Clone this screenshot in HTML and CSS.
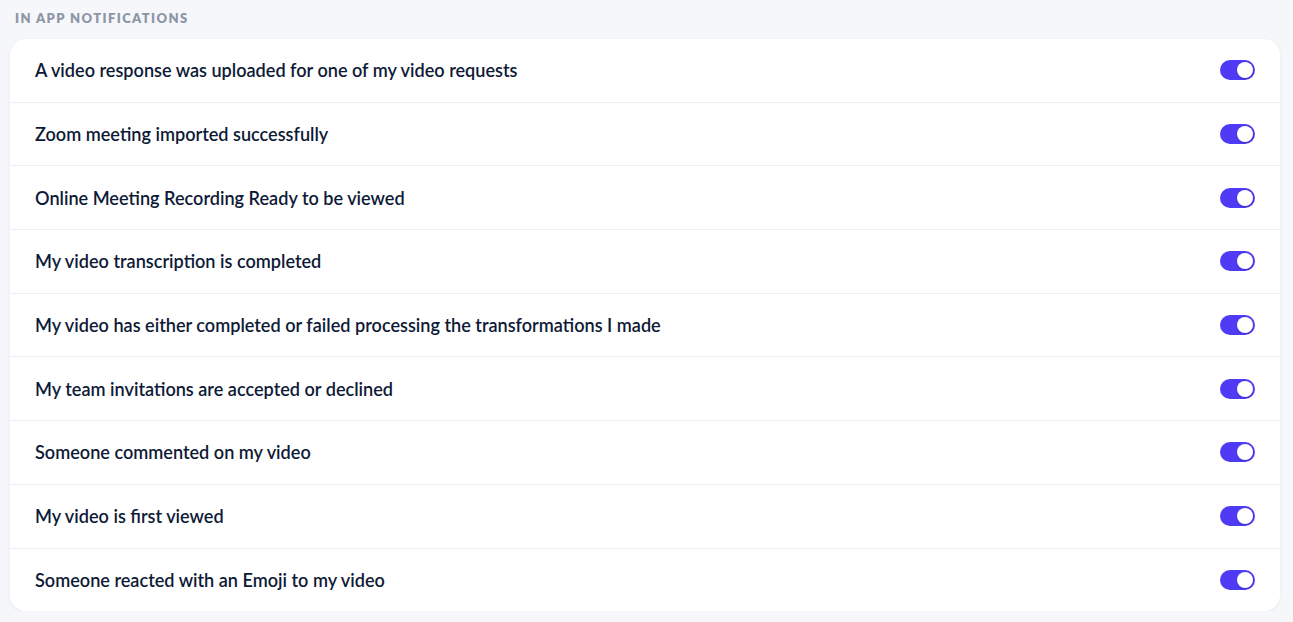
FILE: index.html
```html
<!DOCTYPE html>
<html lang="en">
<head>
    <meta charset="UTF-8">
    <title>Notification settings</title>
    <link rel="stylesheet" href="styles.css">
</head>
<body>
    <div class="section">
        <h3 class="section-title">In app notifications</h3>
        <div class="card">
            <div class="row"><span>A video response was uploaded for one of my video requests</span><span class="toggle on"></span></div>
            <div class="row"><span>Zoom meeting imported successfully</span><span class="toggle on"></span></div>
            <div class="row"><span>Online Meeting Recording Ready to be viewed</span><span class="toggle on"></span></div>
            <div class="row"><span>My video transcription is completed</span><span class="toggle on"></span></div>
            <div class="row"><span>My video has either completed or failed processing the transformations I made</span><span class="toggle on"></span></div>
            <div class="row"><span>My team invitations are accepted or declined</span><span class="toggle on"></span></div>
            <div class="row"><span>Someone commented on my video</span><span class="toggle on"></span></div>
            <div class="row"><span>My video is first viewed</span><span class="toggle on"></span></div>
            <div class="row"><span>Someone reacted with an Emoji to my video</span><span class="toggle on"></span></div>
        </div>
    </div>
</body>
</html>
```

FILE: styles.css
```css
body, html {
    margin: 0;
    padding: 0;
    background-color: #f6f7fb;
    font-family: Lato, "Open Sans", sans-serif;
    overflow: hidden;
}

.section {
    padding: 10px 13px 0 10px;
}

.section-title {
    margin: 0 0 12px 5px;
    font-size: 13px;
    font-weight: 800;
    letter-spacing: 1.4px;
    text-transform: uppercase;
    color: #8d96a6;
    line-height: 17px;
}

.card {
    background-color: white;
    border-radius: 16px;
    box-shadow: 0 1px 4px rgba(30, 40, 80, 0.06);
}

.row {
    display: flex;
    align-items: center;
    justify-content: space-between;
    height: 62.7px;
    padding: 0 25px;
    border-top: 1px solid #eceef2;
    font-size: 18.1px;
    font-weight: 600;
    color: #0e1a36;
}

.row:first-child {
    border-top: none;
}

.toggle {
    position: relative;
    width: 35px;
    height: 20px;
    border-radius: 10px;
    background-color: #c9ccd6;
}

.toggle.on {
    background-color: #4f3af5;
}

.toggle::after {
    content: '';
    position: absolute;
    top: 2px;
    left: 2px;
    width: 16px;
    height: 16px;
    border-radius: 50%;
    background-color: white;
    box-shadow: 0 1px 2px rgba(0, 0, 0, 0.2);
}

.toggle.on::after {
    left: 17px;
}
```
